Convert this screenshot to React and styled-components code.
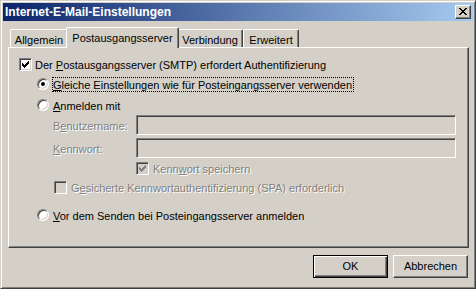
import React from 'react';
import styled, { createGlobalStyle } from 'styled-components';

const FACE = '#D4D0C8';
const SHADOW = '#808080';
const DARK = '#404040';
const FONT = '"Liberation Sans", Arial, sans-serif';

const Global = createGlobalStyle`
  html, body { margin: 0; padding: 0; background: ${FACE}; }
  * { box-sizing: border-box; }
`;

const Window = styled.div`
  width: 476px;
  height: 289px;
  display: flex;
  flex-direction: column;
  background: ${FACE};
  border: 1px solid;
  border-color: ${FACE} ${DARK} ${DARK} ${FACE};
  box-shadow: inset 1px 1px #fff, inset -1px -1px ${SHADOW};
  padding: 2px;
  font-family: ${FONT};
  font-size: 11px;
  color: #000;
`;

const TitleBar = styled.div`
  flex: none;
  height: 18px;
  display: flex;
  align-items: center;
  justify-content: space-between;
  padding: 0 2px 0 2px;
  background: linear-gradient(to right, #0a246a, #a6caf0);
`;

const Title = styled.span`
  color: #fff;
  font-weight: bold;
  font-size: 12px;
  line-height: 14px;
  padding-bottom: 1px;
  white-space: nowrap;
`;

const CloseButton = styled.div`
  width: 16px;
  height: 14px;
  display: flex;
  align-items: center;
  justify-content: center;
  background: ${FACE};
  border: 1px solid;
  border-color: #fff ${DARK} ${DARK} #fff;
  box-shadow: inset -1px -1px ${SHADOW};
  padding-bottom: 1px;
`;

const Body = styled.div`
  flex: 1;
  display: flex;
  flex-direction: column;
  padding: 6px 4px 6px 5px;
`;

const TabStrip = styled.div`
  flex: none;
  height: 20px;
  display: flex;
  align-items: flex-end;
  padding-left: 2px;
`;

const Tab = styled.div`
  width: ${p => p.$w + (p.$active ? 4 : 0)}px;
  height: ${p => (p.$active ? 21 : 18)}px;
  margin: ${p => (p.$active ? '0 -2px -1px -2px' : '0')};
  position: relative;
  z-index: ${p => (p.$active ? 2 : 1)};
  background: ${FACE};
  border-top: 1px solid #fff;
  border-left: 1px solid #fff;
  border-right: 1px solid ${DARK};
  border-radius: 2px 2px 0 0;
  box-shadow: inset -1px 0 ${SHADOW};
  padding-top: 4px;
  text-align: center;
  line-height: 13px;
  white-space: nowrap;
`;

const Panel = styled.div`
  flex: none;
  height: 201px;
  display: flex;
  flex-direction: column;
  border: 1px solid;
  border-color: #fff ${DARK} ${DARK} #fff;
  box-shadow: inset -1px -1px ${SHADOW};
  padding: 10px 0 0 10px;
`;

const OptionRow = styled.div`
  flex: none;
  display: flex;
  align-items: center;
  gap: ${p => p.$gap ?? 3}px;
  height: ${p => p.$h}px;
  margin-top: ${p => p.$mt}px;
  padding-left: ${p => p.$indent}px;
`;

const Text = styled.span`
  line-height: 13px;
  padding-top: 2px;
  white-space: nowrap;
  color: ${p => (p.$disabled ? SHADOW : '#000')};
  text-shadow: ${p => (p.$disabled ? '1px 1px 0 #fff' : 'none')};
`;

const FocusLabel = styled.span`
  line-height: 12px;
  padding-top: 1px;
  white-space: nowrap;
  border: 1px dotted ${p => (p.$focused ? '#000' : 'transparent')};
  padding-right: 1px;
`;

const CheckBoxBox = styled.span`
  flex: none;
  width: 13px;
  height: 13px;
  display: flex;
  align-items: center;
  justify-content: center;
  background: ${p => (p.$disabled ? FACE : '#fff')};
  border: 1px solid;
  border-color: ${SHADOW} #fff #fff ${SHADOW};
  box-shadow: inset 1px 1px ${DARK}, inset -1px -1px ${FACE};
`;

const RadioCircle = styled.span`
  flex: none;
  width: 12px;
  height: 12px;
  border-radius: 50%;
  display: flex;
  align-items: center;
  justify-content: center;
  background: ${p => (p.$disabled ? FACE : '#fff')};
  border: 1px solid;
  border-color: ${SHADOW} #fff #fff ${SHADOW};
  box-shadow: inset 1px 1px ${DARK}, inset -1px -1px ${FACE};
  &::after {
    content: '';
    display: ${p => (p.$checked ? 'block' : 'none')};
    width: 4px;
    height: 4px;
    border-radius: 50%;
    background: #000;
  }
`;

const FieldLabel = styled(Text)`
  width: 83px;
  flex: none;
`;

const TextBox = styled.div`
  flex: none;
  width: 320px;
  height: 20px;
  background: ${p => (p.$disabled ? FACE : '#fff')};
  border: 1px solid;
  border-color: ${SHADOW} #fff #fff ${SHADOW};
  box-shadow: inset 1px 1px ${DARK}, inset -1px -1px ${FACE};
`;

const ButtonRow = styled.div`
  flex: none;
  display: flex;
  justify-content: flex-end;
  gap: 5px;
  margin-top: 7px;
  padding-right: 1px;
`;

const PushButton = styled.div`
  width: 75px;
  height: 23px;
  display: flex;
  align-items: center;
  justify-content: center;
  padding-bottom: 1px;
  line-height: 13px;
  background: ${FACE};
  border: 1px solid;
  border-color: ${p => (p.$default ? '#000' : `#fff ${DARK} ${DARK} #fff`)};
  box-shadow: ${p =>
    p.$default
      ? `inset 1px 1px #fff, inset -1px -1px ${DARK}, inset -2px -2px ${SHADOW}`
      : `inset -1px -1px ${SHADOW}`};
`;

const CheckMark = ({ color }) => (
  <svg width="7" height="7" viewBox="0 0 7 7" shapeRendering="crispEdges" fill={color}>
    <rect x="6" y="0" width="1" height="1" />
    <rect x="5" y="1" width="2" height="1" />
    <rect x="0" y="2" width="1" height="1" />
    <rect x="4" y="2" width="3" height="1" />
    <rect x="0" y="3" width="2" height="1" />
    <rect x="3" y="3" width="3" height="1" />
    <rect x="0" y="4" width="5" height="1" />
    <rect x="1" y="5" width="3" height="1" />
    <rect x="2" y="6" width="1" height="1" />
  </svg>
);

const CloseGlyph = () => (
  <svg width="8" height="7" viewBox="0 0 8 7" shapeRendering="crispEdges" fill="#000">
    <rect x="0" y="0" width="2" height="1" />
    <rect x="6" y="0" width="2" height="1" />
    <rect x="1" y="1" width="2" height="1" />
    <rect x="5" y="1" width="2" height="1" />
    <rect x="2" y="2" width="4" height="1" />
    <rect x="3" y="3" width="2" height="1" />
    <rect x="2" y="4" width="4" height="1" />
    <rect x="1" y="5" width="2" height="1" />
    <rect x="5" y="5" width="2" height="1" />
    <rect x="0" y="6" width="2" height="1" />
    <rect x="6" y="6" width="2" height="1" />
  </svg>
);

const CheckBox = ({ checked, disabled }) => (
  <CheckBoxBox $disabled={disabled}>
    {checked && <CheckMark color={disabled ? SHADOW : '#000'} />}
  </CheckBoxBox>
);

const tabs = [
  { label: 'Allgemein', w: 58 },
  { label: 'Postausgangsserver', w: 109, active: true },
  { label: 'Verbindung', w: 66 },
  { label: 'Erweitert', w: 56 },
];

export default function App() {
  return (
    <>
      <Global />
      <Window>
        <TitleBar>
          <Title>Internet-E-Mail-Einstellungen</Title>
          <CloseButton>
            <CloseGlyph />
          </CloseButton>
        </TitleBar>
        <Body>
          <TabStrip>
            {tabs.map(t => (
              <Tab key={t.label} $w={t.w} $active={t.active}>
                {t.label}
              </Tab>
            ))}
          </TabStrip>
          <Panel>
            <OptionRow $h={13} $mt={0} $indent={0}>
              <CheckBox checked />
              <Text>
                Der <u>P</u>ostausgangsserver (SMTP) erfordert Authentifizierung
              </Text>
            </OptionRow>
            <OptionRow $h={14} $mt={6} $indent={18}>
              <RadioCircle $checked />
              <FocusLabel $focused>
                <u>G</u>leiche Einstellungen wie für Posteingangsserver verwenden
              </FocusLabel>
            </OptionRow>
            <OptionRow $h={14} $mt={7} $indent={18}>
              <RadioCircle />
              <FocusLabel>
                <u>A</u>nmelden mit
              </FocusLabel>
            </OptionRow>
            <OptionRow $h={20} $mt={3} $indent={34} $gap={0}>
              <FieldLabel $disabled>
                B<u>e</u>nutzername:
              </FieldLabel>
              <TextBox $disabled />
            </OptionRow>
            <OptionRow $h={20} $mt={3} $indent={34} $gap={0}>
              <FieldLabel $disabled>
                <u>K</u>ennwort:
              </FieldLabel>
              <TextBox $disabled />
            </OptionRow>
            <OptionRow $h={13} $mt={4} $indent={117} $gap={4}>
              <CheckBox checked disabled />
              <Text $disabled>
                Kenn<u>w</u>ort speichern
              </Text>
            </OptionRow>
            <OptionRow $h={13} $mt={6} $indent={35} $gap={4}>
              <CheckBox disabled />
              <Text $disabled>
                G<u>e</u>sicherte Kennwortauthentifizierung (SPA) erforderlich
              </Text>
            </OptionRow>
            <OptionRow $h={14} $mt={14} $indent={18}>
              <RadioCircle />
              <FocusLabel>
                <u>V</u>or dem Senden bei Posteingangsserver anmelden
              </FocusLabel>
            </OptionRow>
          </Panel>
          <ButtonRow>
            <PushButton $default>OK</PushButton>
            <PushButton>Abbrechen</PushButton>
          </ButtonRow>
        </Body>
      </Window>
    </>
  );
}
